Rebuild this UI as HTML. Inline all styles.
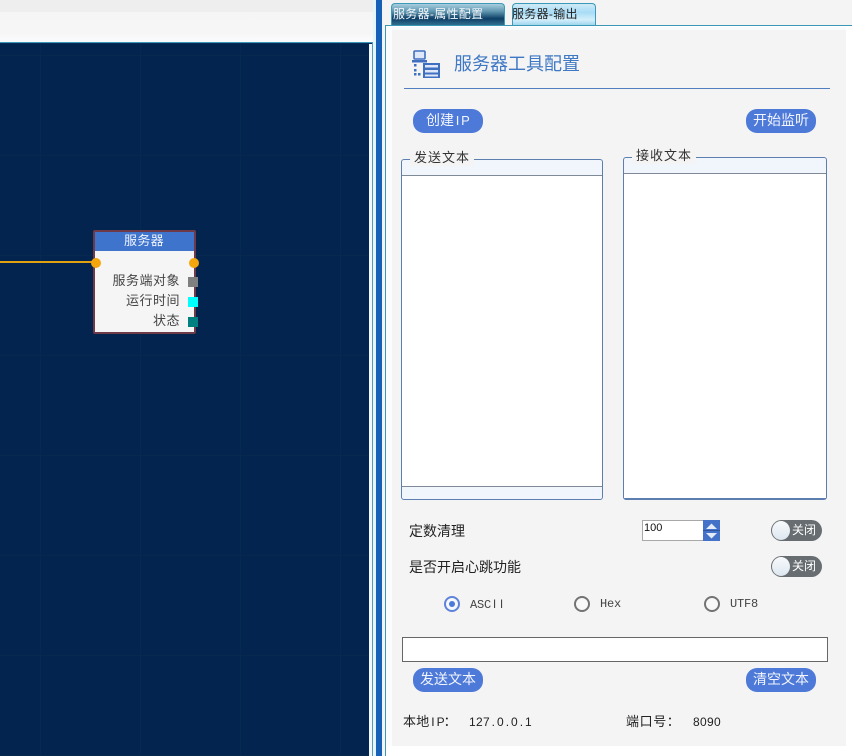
<!DOCTYPE html>
<html><head><meta charset="utf-8"><style>
*{box-sizing:border-box}
html,body{margin:0;padding:0;width:852px;height:756px;overflow:hidden;background:#fff}
body{position:relative;font-family:"Liberation Sans","WenQuanYi Zen Hei","Noto Sans CJK SC",sans-serif;font-size:13px;color:#222}
.a{position:absolute}
.t{position:absolute;white-space:nowrap;line-height:16px}
.c{display:inline-block;width:7px;text-align:center}
.m{font-family:"Liberation Mono","WenQuanYi Zen Hei",monospace}
.btn{position:absolute;width:70px;height:24px;border-radius:11px;background:#4d79d8;color:#f2f5ff;text-align:center;line-height:23px;font-size:14px;letter-spacing:0}
.gb{position:absolute;border:1px solid #5d7fb0;border-radius:3px;background:#f1f6fd}
.gb .in{position:absolute;left:0;right:0;background:#fff;border-top:1px solid #7f8a99}
.leg{position:absolute;background:#f4f4f4;padding:0 4px;font-size:13px;line-height:16px;color:#333;letter-spacing:1px;white-space:nowrap}
.tog{position:absolute;left:771px;width:51px;height:21px;border-radius:11px;background:#676d70;color:#fff;font-size:12px;line-height:20px;padding-left:21px}
.tog i{position:absolute;left:1px;top:1px;width:18px;height:19px;border-radius:50%;background:linear-gradient(#f8fafc,#dde6f0)}
.rad{position:absolute;top:596px;width:16px;height:16px;border-radius:50%;border:2.500px solid #737373;background:#f8f8f8}
</style></head><body>
<div class="a" style="left:0;top:0;width:376px;height:12px;background:#eeeeee"></div>
<div class="a" style="left:0;top:12px;width:373px;height:30px;background:linear-gradient(#f5f5f5,#f6f6f6 70%,#fbfcfe)"></div>
<div class="a" style="left:0;top:42px;width:373px;height:1.500px;background:#3a97b5"></div>
<div class="a" style="left:0;top:43px;width:373px;height:1px;background:#0a2c58"></div>
<div class="a" style="left:0;top:44px;width:369px;height:712px;background-color:#02244f;
background-image:linear-gradient(90deg,#05294f 1px,transparent 1px),linear-gradient(180deg,#05294f 1px,transparent 1px);
background-size:100px 100px,100px 100px;background-position:40px 11px,40px 11px"></div>
<div class="a" style="left:369px;top:44px;width:3px;height:712px;background:#eef8fe"></div>
<div class="a" style="left:372px;top:42px;width:1px;height:714px;background:#5a9ab8"></div>
<div class="a" style="left:373px;top:0;width:3px;height:756px;background:#e4f5ff"></div>
<div class="a" style="left:376px;top:0;width:6px;height:756px;background:#1660b8"></div>
<div class="a" style="left:382px;top:0;width:470px;height:756px;background:#f4f4f4"></div>

<!-- node -->
<div class="a" style="left:0;top:261px;width:93px;height:2px;background:#e0a010"></div>
<div class="a" style="left:93px;top:230px;width:103px;height:104px;border:2px solid #6f3a48;background:#f5f5f5;border-radius:2px"></div>
<div class="a" style="left:95px;top:232px;width:99px;height:19px;background:#3f74cc"></div>
<div class="t" style="left:95px;top:233px;width:98px;text-align:center;color:#eef3ff;font-size:13px;letter-spacing:.3px">服务器</div>
<div class="a" style="left:91px;top:258px;width:10px;height:10px;border-radius:50%;background:#f5a60d"></div>
<div class="a" style="left:189px;top:258px;width:10px;height:10px;border-radius:50%;background:#f5a60d"></div>
<div class="t" style="right:672px;top:273px;color:#444;letter-spacing:.5px">服务端对象</div>
<div class="t" style="right:672px;top:293px;color:#444;letter-spacing:.5px">运行时间</div>
<div class="t" style="right:672px;top:313px;color:#444;letter-spacing:.5px">状态</div>
<div class="a" style="left:188px;top:277px;width:10px;height:10px;background:#808080"></div>
<div class="a" style="left:188px;top:297px;width:10px;height:10px;background:#00ffff"></div>
<div class="a" style="left:188px;top:317px;width:10px;height:10px;background:#008080"></div>

<!-- panel -->
<div class="a" style="left:385px;top:25px;width:467px;height:731px;border-left:1px solid #3a97b5;border-top:1px solid #3a97b5;background:#fff"></div>
<div class="a" style="left:392px;top:30px;width:454px;height:716px;background:#f4f4f4"></div>
<div class="a" style="left:387px;top:27px;width:459px;height:3px;background:#f8fbfd"></div>
<div class="a" style="left:387px;top:27px;width:5px;height:719px;background:#fafcfd"></div>

<!-- tabs -->
<div class="a" style="left:391px;top:3px;width:114px;height:22px;border:1px solid #3c9ab8;border-bottom:0;border-radius:4px 4px 0 0;background:linear-gradient(#a9cfe0 0,#5f96b0 35%,#0e3f66 70%,#2f6f90 100%)"></div>
<div class="t" style="left:393px;top:6px;font-size:12px;color:#f4f8fb;letter-spacing:.3px">服务器-属性配置</div>
<div class="a" style="left:512px;top:3px;width:84px;height:22px;border:1px solid #3c9ab8;border-bottom:0;border-radius:4px 4px 0 0;background:linear-gradient(#cfeaf6 0,#a8dcf6 40%,#d4effb 75%,#9fd6ee 100%)"></div>
<div class="t" style="left:512px;top:6px;font-size:12px;color:#222;letter-spacing:.3px">服务器-输出</div>

<!-- icon -->
<svg class="a" style="left:412px;top:49px" width="30" height="30" viewBox="0 0 30 30">
<rect x="2" y="2" width="11" height="8" rx="1" fill="#dfe8f8" stroke="#3f6fc0" stroke-width="1.600"/>
<rect x="0" y="11" width="15" height="2.500" fill="#3f6fc0"/>
<rect x="2" y="15" width="2.500" height="2.500" fill="#3f6fc0"/><rect x="2" y="20" width="2.500" height="2.500" fill="#3f6fc0"/><rect x="2" y="24" width="2.500" height="2.500" fill="#3f6fc0"/><rect x="6" y="24" width="2.500" height="2.500" fill="#3f6fc0"/>
<rect x="11" y="14" width="17" height="15" fill="#3f6fc0"/>
<rect x="13" y="16" width="13" height="2.500" fill="#dfe8f8"/><rect x="13" y="21" width="13" height="2.500" fill="#dfe8f8"/><rect x="13" y="25.500" width="13" height="2" fill="#dfe8f8"/>
</svg>
<div class="t" style="left:454px;top:53px;font-size:18px;line-height:22px;color:#3f78c4">服务器工具配置</div>
<div class="a" style="left:404px;top:88px;width:426px;height:1px;background:#4f7fc0"></div>

<div class="btn" style="left:413px;top:109px">创建<span class="c" style="font-size:13px">I</span><span class="c" style="font-size:13px;width:9px">P</span></div>
<div class="btn" style="left:746px;top:109px">开始监听</div>

<!-- group boxes -->
<div class="gb" style="left:401px;top:159px;width:202px;height:341px">
<div class="in" style="top:15px;height:312px;border-bottom:1px solid #7f8a99"></div></div>
<div class="leg" style="left:410px;top:150px">发送文本</div>
<div class="gb" style="left:623px;top:157px;width:204px;height:343px;border-bottom:2px solid #5d7fb0">
<div class="in" style="top:15px;bottom:0"></div></div>
<div class="leg" style="left:632px;top:148px">接收文本</div>

<div class="t" style="left:409px;top:523px;font-size:14px;color:#222">定数清理</div>
<div class="t" style="left:409px;top:559px;font-size:14px;color:#222">是否开启心跳功能</div>

<!-- spin -->
<div class="a" style="left:642px;top:520px;width:62px;height:21px;background:#fff;border:1px solid #a8a8a8;border-right:0"></div>
<div class="t" style="left:644px;top:520px;font-size:11px;color:#111">100</div>
<div class="a" style="left:703px;top:520px;width:17px;height:21px;background:#4472c8"></div>
<div class="a" style="left:703px;top:530px;width:17px;height:1px;background:#2f559c"></div>
<svg class="a" style="left:703px;top:520px" width="17" height="21"><path d="M3 9L8.500 3.500L14 9Z M3 13L14 13L8.500 18.500Z" fill="#e4ecfa"/></svg>

<div class="tog" style="top:520px"><i></i>关闭</div>
<div class="tog" style="top:556px"><i></i>关闭</div>

<div class="rad" style="left:444px;border-color:#5f83d8;background:#f6f8ff"></div>
<div class="a" style="left:449px;top:601px;width:6px;height:6px;border-radius:50%;background:#4d79d8"></div>
<div class="t" style="left:470px;top:596px;font-size:12px;color:#444"><span class="m" style="letter-spacing:-.2px">ASC</span><span class="c">I</span><span class="c">I</span></div>
<div class="rad" style="left:574px"></div>
<div class="t m" style="left:600px;top:596px;font-size:12px;color:#444;letter-spacing:-.2px">Hex</div>
<div class="rad" style="left:704px"></div>
<div class="t m" style="left:730px;top:596px;font-size:12px;color:#444;letter-spacing:-.2px">UTF8</div>

<div class="a" style="left:402px;top:637px;width:426px;height:25px;background:#fff;border:1px solid #666"></div>
<div class="btn" style="left:413px;top:668px">发送文本</div>
<div class="btn" style="left:746px;top:668px">清空文本</div>

<div class="t" style="left:403px;top:714px;font-size:13px;color:#222;letter-spacing:.3px">本地<span class="c" style="font-size:12px">I</span><span class="c" style="font-size:12px">P</span>：</div>
<div class="t" style="left:469px;top:714px;font-size:12px;color:#222;letter-spacing:.33px">127<span class="c">.</span>0<span class="c">.</span>0<span class="c">.</span>1</div>
<div class="t" style="left:626px;top:714px;font-size:13px;color:#222;letter-spacing:.6px">端口号：</div>
<div class="t" style="left:693px;top:714px;font-size:12px;color:#222;letter-spacing:.33px">8090</div>
</body></html>
